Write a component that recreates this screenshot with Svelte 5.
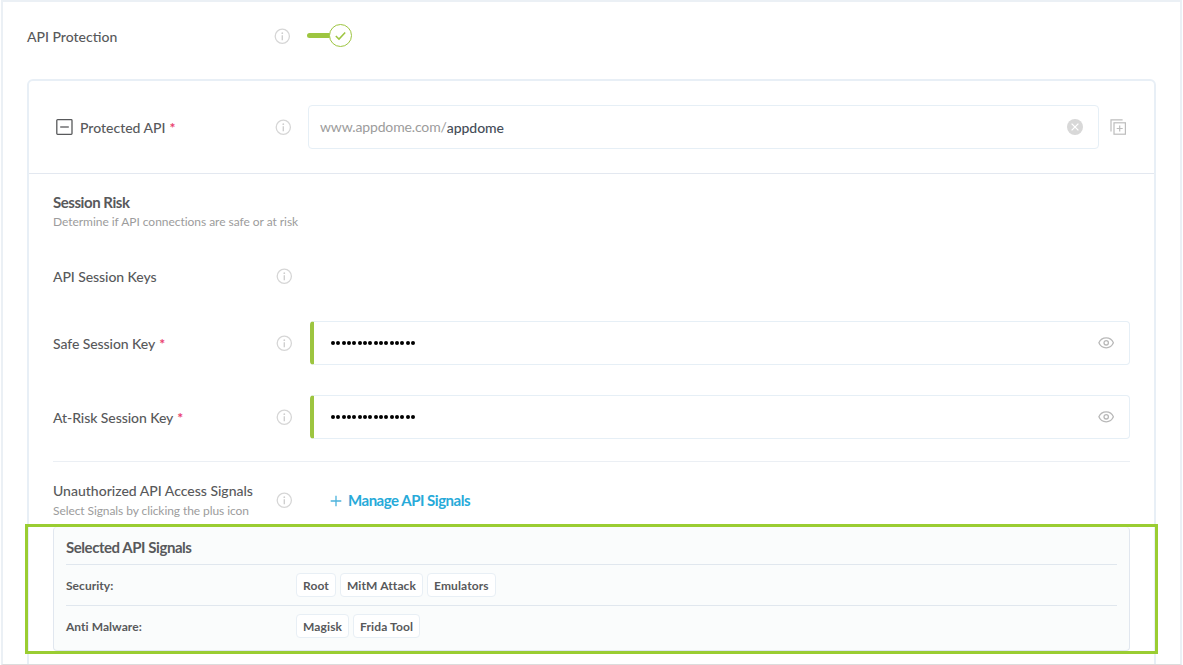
<script lang="ts">
	let apiHost = 'www.appdome.com/';
	let apiPath = $state('appdome');
	let enabled = $state(true);

	const sessionKeys = [
		{ label: 'Safe Session Key', length: 16 },
		{ label: 'At-Risk Session Key', length: 16 }
	];

	const signalGroups = [
		{ name: 'Security:', signals: ['Root', 'MitM Attack', 'Emulators'] },
		{ name: 'Anti Malware:', signals: ['Magisk', 'Frida Tool'] }
	];
</script>

{#snippet info()}
	<svg class="info" width="16" height="16" viewBox="0 0 16 16" fill="none">
		<circle cx="8.3" cy="8.3" r="7.1" stroke="#d6d6d6" stroke-width="1.3" />
		<circle cx="8.3" cy="5.2" r="0.9" fill="#cfcfcf" />
		<path d="M8.3 7.3v4.9" stroke="#cfcfcf" stroke-width="1.4" />
	</svg>
{/snippet}

<div class="frame">
	<div class="feature">
		<span class="label feature-label">API Protection</span>
		{@render info()}
		<button class="toggle" aria-label="API Protection" aria-pressed={enabled} onclick={() => (enabled = !enabled)}>
			<span class="track"></span>
			<span class="knob">
				<svg width="12" height="10" viewBox="0 0 12 10" fill="none">
					<path d="M.8 5 4 8.1 10.2 1.4" stroke="#9dc540" stroke-width="1.5" />
				</svg>
			</span>
		</button>
	</div>

	<div class="card">
		<div class="api-row">
			<svg class="collapse" width="17" height="16" viewBox="0 0 17 16" fill="none" stroke="#58595b" stroke-width="1.3">
				<rect x="0.8" y="0.7" width="15.2" height="14.6" rx="0.8" />
				<path d="M4.2 8h8.6" />
			</svg>
			<span class="label api-label">Protected API<b class="required">*</b></span>
			{@render info()}
			<div class="field api-field">
				<span class="host">{apiHost}</span><span class="path">{apiPath}</span>
				<svg class="clear" width="16" height="16" viewBox="0 0 16 16" fill="none">
					<circle cx="8" cy="8" r="8" fill="#d8d8d8" />
					<path d="M4.6 4.6l6.8 6.8M11.4 4.6l-6.8 6.8" stroke="#fff" stroke-width="1.3" />
				</svg>
			</div>
			<svg class="duplicate" width="16" height="16" viewBox="0 0 16 16" fill="none" stroke="#bdbdbd" stroke-width="1.2">
				<path d="M1 12.6V.9h11.6" />
				<rect x="4" y="3.8" width="11.4" height="11.4" />
				<path d="M9.7 6.5v6M6.7 9.5h6" />
			</svg>
		</div>

		<div class="body">
			<div class="section-head">
				<h2>Session Risk</h2>
				<p class="hint">Determine if API connections are safe or at risk</p>
			</div>

			<div class="row">
				<span class="label">API Session Keys</span>
				{@render info()}
			</div>

			{#each sessionKeys as key}
				<div class="row key-row">
					<span class="label">{key.label}<b class="required">*</b></span>
					{@render info()}
					<div class="field key-field">
						<span class="dots">
							{#each Array(key.length) as _}<i></i>{/each}
						</span>
						<svg width="16" height="12" viewBox="0 0 16 12" fill="none" stroke="#b9b9b9" stroke-width="1.3">
							<path d="M.9 5.8C2.3 2.4 5 .8 8.2.8S14 2.4 15.4 5.8C14 9.2 11.4 10.8 8.2 10.8S2.3 9.2.9 5.8z" />
							<circle cx="8.2" cy="5.8" r="2.2" />
						</svg>
					</div>
				</div>
			{/each}

			<div class="signals">
				<div class="signals-head">
					<div class="signals-title">
						<span class="label">Unauthorized API Access Signals</span>
						<p class="hint">Select Signals by clicking the plus icon</p>
					</div>
					{@render info()}
					<button class="manage">
						<svg width="12" height="12" viewBox="0 0 12 12" fill="none" stroke="#4cb3dc" stroke-width="1.3">
							<path d="M6 .7v10.6M.7 6h10.6" />
						</svg>
						<span>Manage API Signals</span>
					</button>
				</div>

				<div class="selected">
					<h3>Selected API Signals</h3>
					{#each signalGroups as group}
						<div class="group">
							<span class="group-name">{group.name}</span>
							{#each group.signals as signal}
								<span class="chip">{signal}</span>
							{/each}
						</div>
					{/each}
				</div>
				<div class="highlight"></div>
			</div>
		</div>
	</div>
</div>

<style>
	:global(body) {
		background: #fff;
	}

	.frame {
		box-sizing: border-box;
		width: 1181px;
		height: 665px;
		margin-left: 1px;
		border: 2px solid #ebf0f5;
		border-bottom: 1px solid #dcdcdc;
		font-family: Lato, 'Liberation Sans', sans-serif;
		color: #58595b;
		overflow: hidden;
	}

	h2,
	h3,
	p {
		margin: 0;
	}

	button {
		padding: 0;
		border: 0;
		background: none;
		font: inherit;
		cursor: pointer;
	}

	svg {
		display: block;
		flex: none;
	}

	.info {
		overflow: visible;
	}

	.label {
		font-size: 14px;
		font-weight: 500;
		line-height: 20px;
		white-space: nowrap;
	}

	.required {
		margin-left: 4px;
		color: #e9406f;
		font-weight: 700;
	}

	.hint {
		font-size: 12px;
		line-height: 16px;
		letter-spacing: -0.04px;
		color: #9c9c9c;
		white-space: nowrap;
	}

	.feature {
		display: flex;
		align-items: center;
		height: 68px;
		padding-left: 24px;
		margin-bottom: 9px;
	}

	.feature-label {
		width: 247px;
		padding-top: 2px;
	}

	.toggle {
		display: flex;
		align-items: center;
		margin: -1px 0 0 17px;
	}

	.track {
		width: 23px;
		height: 5px;
		margin-right: -1px;
		border-radius: 3px 0 0 3px;
		background: #9dc540;
	}

	.knob {
		box-sizing: border-box;
		display: flex;
		align-items: center;
		justify-content: center;
		width: 23px;
		height: 23px;
		border: 1px solid #9dc540;
		border-radius: 50%;
		background: #fff;
	}

	.card {
		box-sizing: border-box;
		width: 1129px;
		height: 600px;
		margin-left: 24px;
		border: 2px solid #e8eff6;
		border-radius: 6px 6px 0 0;
	}

	.api-row {
		display: flex;
		align-items: center;
		height: 92px;
		padding-left: 27px;
		border-bottom: 1px solid #e3e8f0;
	}

	.api-label {
		width: 195px;
		margin-left: 7px;
		padding-top: 2px;
	}

	.field {
		box-sizing: border-box;
		display: flex;
		align-items: center;
		height: 44px;
		border: 1px solid #e6eff6;
		border-radius: 4px;
	}

	.api-field {
		width: 791px;
		margin-left: 17px;
		padding: 0 15px 0 11px;
		font-size: 14px;
		line-height: 20px;
	}

	.host {
		letter-spacing: -0.14px;
		color: #9c9c9c;
	}

	.path {
		padding-top: 2px;
		color: #454d58;
		font-weight: 500;
		letter-spacing: -0.05px;
	}

	.clear {
		margin-left: auto;
	}

	.duplicate {
		margin-left: 11px;
	}

	.body {
		padding: 0 24px;
	}

	.section-head {
		box-sizing: border-box;
		height: 80px;
		padding-top: 18px;
	}

	h2,
	h3 {
		font-size: 15px;
		font-weight: 700;
		line-height: 20px;
		letter-spacing: -0.45px;
	}

	.section-head .hint {
		padding-top: 2px;
	}

	.row {
		display: flex;
		align-items: center;
		height: 44px;
		margin-bottom: 23px;
	}

	.row .label {
		width: 223px;
		padding-top: 1px;
		letter-spacing: -0.07px;
	}

	.key-row {
		margin-bottom: 30px;
	}

	.key-field {
		flex: 1;
		margin-left: 18px;
		padding: 0 15px 0 17px;
		border-left: 4px solid #9dc540;
	}

	.dots {
		display: flex;
		gap: 1.35px;
		margin-right: auto;
	}

	.dots i {
		width: 4px;
		height: 4px;
		border-radius: 50%;
		background: #000;
	}

	.signals {
		position: relative;
		margin-top: -8px;
		border-top: 1px solid #ebeff4;
	}

	.signals-head {
		display: flex;
		align-items: center;
		height: 65px;
	}

	.signals-title {
		width: 223px;
		margin-top: 10px;
	}

	.signals-title .label {
		display: block;
		margin-bottom: 2px;
	}

	.signals-title .hint {
		letter-spacing: -0.08px;
	}

	.signals-head .info {
		margin-top: 11px;
	}

	.manage {
		display: flex;
		align-items: center;
		gap: 6px;
		margin: 13px 0 0 38px;
		color: #27aad9;
		font-size: 15px;
		font-weight: 700;
		line-height: 20px;
		letter-spacing: -0.48px;
	}

	.manage span {
		padding-bottom: 2px;
	}

	.selected {
		box-sizing: border-box;
		height: 124px;
		padding: 10px 12px 0;
		border: 1px solid #e1e7ef;
		border-top: 0;
		border-radius: 4px;
		background: #fafcfc;
	}

	h3 {
		height: 27px;
	}

	.group {
		display: flex;
		align-items: center;
		gap: 4px;
		height: 40px;
		border-top: 1px solid #e0e7ee;
		font-size: 12px;
		font-weight: 700;
		letter-spacing: 0.12px;
	}

	.group-name {
		width: 226px;
		padding-top: 1px;
		letter-spacing: 0.05px;
	}

	.chip {
		box-sizing: border-box;
		height: 24px;
		padding: 1px 6px 0;
		border: 1px solid #e8eff5;
		border-radius: 4px;
		background: #fff;
		line-height: 22px;
	}

	.highlight {
		position: absolute;
		box-sizing: border-box;
		top: 62px;
		left: -28px;
		width: 1133px;
		height: 130px;
		border: 3px solid #9acd32;
		pointer-events: none;
	}
</style>
